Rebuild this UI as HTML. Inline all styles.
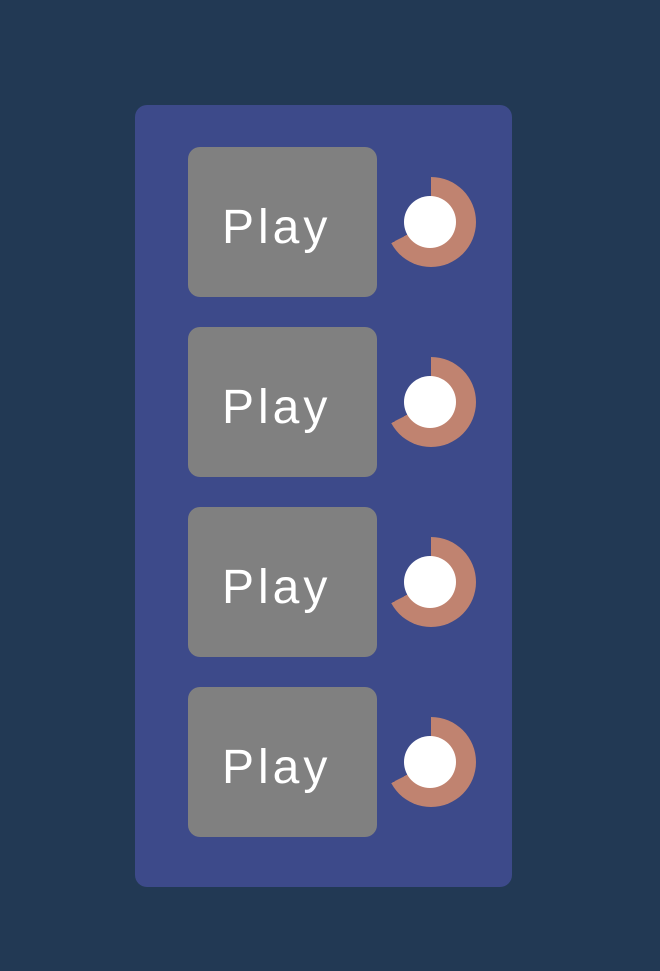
<!DOCTYPE html>
<html><head><style>
html,body{margin:0;padding:0;width:660px;height:971px;background:#223954;overflow:hidden}
.panel{position:absolute;left:135px;top:105px;width:377px;height:782px;background:#3d4a8a;border-radius:12px}
.btn{position:absolute;left:188px;width:189px;height:150px;background:#808080;border-radius:12px}
.btn span{position:absolute;left:34px;top:57px;font:48px "Liberation Sans",sans-serif;color:#fff;letter-spacing:4px;line-height:1}
.ring{position:absolute;left:386px;width:90px;height:90px;border-radius:50%;background:conic-gradient(#c08370 0deg 242deg,transparent 242deg)}
.ring::after{content:"";position:absolute;left:18px;top:19px;width:52px;height:52px;border-radius:50%;background:#fff}
</style></head><body>
<div class="panel"></div>
<div class="btn" style="top:147px"><span>Play</span></div>
<div class="ring" style="top:177px"></div>
<div class="btn" style="top:327px"><span>Play</span></div>
<div class="ring" style="top:357px"></div>
<div class="btn" style="top:507px"><span>Play</span></div>
<div class="ring" style="top:537px"></div>
<div class="btn" style="top:687px"><span>Play</span></div>
<div class="ring" style="top:717px"></div>
</body></html>
